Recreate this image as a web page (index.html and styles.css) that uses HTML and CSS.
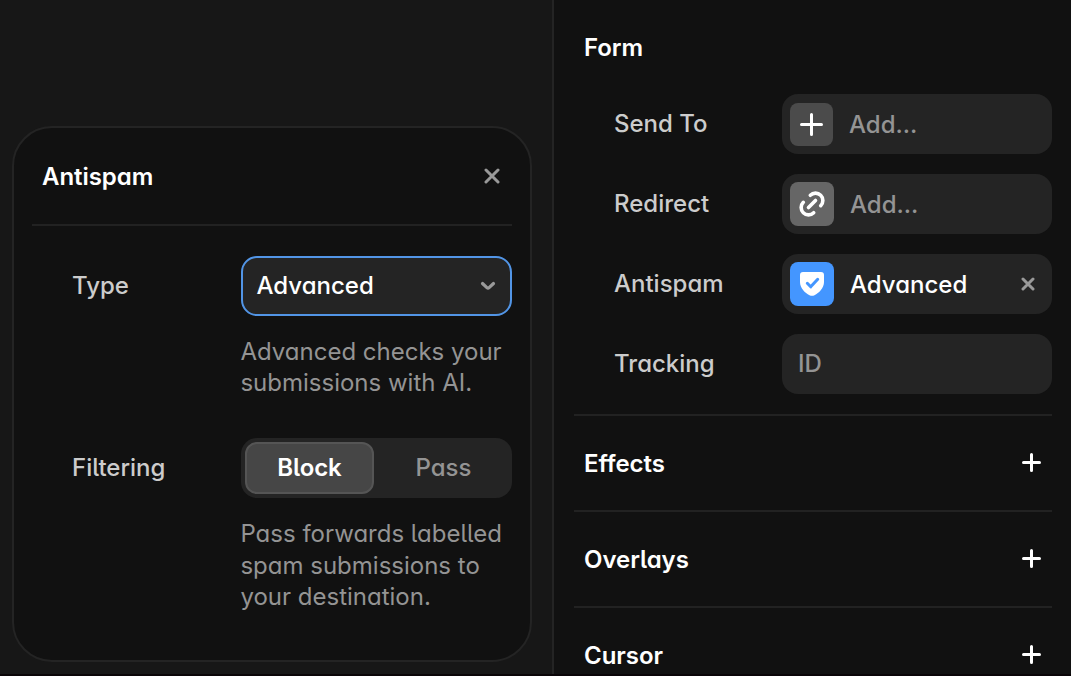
FILE: index.html
```
<!DOCTYPE html>
<html lang="en">
<head>
<meta charset="utf-8">
<title>Form settings</title>
<link rel="stylesheet" href="styles.css">
</head>
<body>
<div class="app">
  <main class="canvas">
    <section class="popover">
      <header class="popover-head">
        <h2 class="title">Antispam</h2>
        <svg class="close" width="16" height="16" viewBox="0 0 16 16"><path d="M2 2l12 12M14 2L2 14"/></svg>
      </header>
      <div class="popover-body">
        <div class="field">
          <span class="label">Type</span>
          <div class="control">
            <div class="select">Advanced<svg class="chevron" width="16" height="10" viewBox="0 0 16 10"><path d="M2.500 2.500L6.900 6.600Q8 7.600 9.100 6.600L13.500 2.500"/></svg></div>
            <p class="hint">Advanced checks your<br>submissions with AI.</p>
          </div>
        </div>
        <div class="field filtering">
          <span class="label">Filtering</span>
          <div class="control">
            <div class="segmented"><span class="segment active">Block</span><span class="segment pass">Pass</span></div>
            <p class="hint">Pass forwards labelled<br>spam submissions to<br>your destination.</p>
          </div>
        </div>
      </div>
    </section>
  </main>
  <aside class="panel">
    <section class="form">
      <h2 class="title form-title">Form</h2>
      <div class="row"><span class="label">Send To</span><div class="input"><span class="tile send"><svg width="25" height="25" viewBox="0 0 25 25"><path d="M12.500 2.500v20M2.500 12.500h20"/></svg></span><span class="placeholder">Add...</span></div></div>
      <div class="row"><span class="label">Redirect</span><div class="input"><span class="tile link"><svg width="28" height="28" viewBox="0 0 28 28"><path d="M10.500 17.500l7-7M12.300 5.300A7.300 7.300 0 0 1 22.700 15.700M15.700 22.700A7.300 7.300 0 0 1 5.300 12.300"/></svg></span><span class="placeholder">Add...</span></div></div>
      <div class="row"><span class="label">Antispam</span><div class="input"><span class="tile shield"><svg width="28" height="28" viewBox="0 0 28 28"><path class="shield-body" d="M5 2H23Q26 2 26 5v7c0 6-5 11-9.500 13.200Q14 26.500 11.500 25.200C7 23 2 18 2 12V5Q2 2 5 2z"/><path class="shield-check" d="M9.300 13.300l3.400 3.500 7-7.500"/></svg></span><span class="value">Advanced</span><svg class="clear" width="14" height="14" viewBox="0 0 14 14"><path d="M2 2l10 10M12 2L2 12"/></svg></div></div>
      <div class="row"><span class="label">Tracking</span><div class="input"><span class="placeholder id">ID</span></div></div>
    </section>
    <section class="group"><h2 class="title">Effects</h2><svg class="plus" width="20" height="20" viewBox="0 0 20 20"><path d="M9.500 1.500v16M1.500 9.500h16"/></svg></section>
    <section class="group"><h2 class="title">Overlays</h2><svg class="plus" width="20" height="20" viewBox="0 0 20 20"><path d="M9.500 1.500v16M1.500 9.500h16"/></svg></section>
    <section class="group"><h2 class="title">Cursor</h2><svg class="plus" width="20" height="20" viewBox="0 0 20 20"><path d="M9.500 1.500v16M1.500 9.500h16"/></svg></section>
  </aside>
</div>
</body>
</html>
```
FILE: styles.css
```
* { box-sizing: border-box; }
body { margin: 0; background: #111; color: #ccc; font: 500 24px/32px Inter, "Liberation Sans", sans-serif; font-feature-settings: "cv11", "cv05"; overflow: hidden; }
h2, p { margin: 0; font: inherit; font-feature-settings: inherit; }
svg { display: block; fill: none; stroke: currentColor; stroke-width: 3; stroke-linecap: round; stroke-linejoin: round; flex: none; }
.app { display: flex; height: 676px; border-bottom: 2px solid #0a0508; overflow: hidden; }
.canvas { width: 552px; padding: 126px 20px 0 12px; background: #171717; flex: none; }
.popover { height: 536px; border: 2px solid #242424; border-radius: 40px; background: #111; padding: 0 18px; }
.popover-head { height: 98px; display: flex; align-items: center; justify-content: space-between; padding: 0 12px 0 10px; border-bottom: 2px solid #222; }
.title { color: #fff; font-weight: 600; letter-spacing: -.05px; padding-top: 2px; }
.close { color: #999; }
.popover-body { padding: 30px 0 0 40px; }
.field { display: grid; grid-template-columns: 169px 271px; }
.field .label { line-height: 60px; }
.filtering { margin-top: 39px; }
.select { height: 60px; border: 2px solid #5295e6; border-radius: 16px; background: #242424; color: #fff; display: flex; align-items: center; justify-content: space-between; padding: 0 14px 0 13.5px; }
.chevron { color: #999; stroke-width: 3.2; }
.hint { height: 63px; margin: 20px 0 0 -.6px; color: #949494; font-weight: 400; line-height: 31.4px; }
.filtering .hint { height: auto; line-height: 31.5px; }
.segmented { height: 60px; display: grid; grid-template-columns: 129px 1fr; padding: 4px; border-radius: 16px; background: #242424; }
.segment { display: flex; align-items: center; justify-content: center; color: #949494; }
.pass { padding-left: 5px; }
.active { color: #fff; background: #464646; border: 2px solid #555; border-radius: 12px; font-weight: 600; letter-spacing: -.1px; }
.panel { flex: 1; border-left: 2px solid #242424; padding: 0 19px 0 20px; overflow: hidden; }
.form { height: 414px; padding: 30px 0 0 10px; }
.form-title { margin-bottom: 30px; }
.row { display: grid; grid-template-columns: 168px 270px; padding-left: 30px; align-items: center; height: 60px; margin-bottom: 20px; }
.input { height: 60px; border-radius: 16px; background: #242424; display: flex; align-items: center; padding: 0 17px 0 8px; }
.tile { width: 44px; height: 44px; border-radius: 8px; margin-right: 16px; display: flex; align-items: center; justify-content: center; color: #fff; flex: none; }
.send { width: 43px; height: 43px; margin-top: 1px; background: #4b4b4b; }
.link { background: #666; }
.link svg { stroke-width: 3.6; }
.shield { background: #4496ff; }
.shield-body { fill: #fff; stroke: none; }
.shield-check { stroke: #4496ff; }
.placeholder { color: #949494; }
.tile + span { padding-top: 2px; }
.placeholder.id { margin-left: 8px; }
.value { color: #fff; }
.clear { margin-left: auto; color: #999; }
.group { height: 96px; border-top: 2px solid #222; display: flex; align-items: center; justify-content: space-between; padding: 0 10px; }
.plus { color: #fff; }
```
